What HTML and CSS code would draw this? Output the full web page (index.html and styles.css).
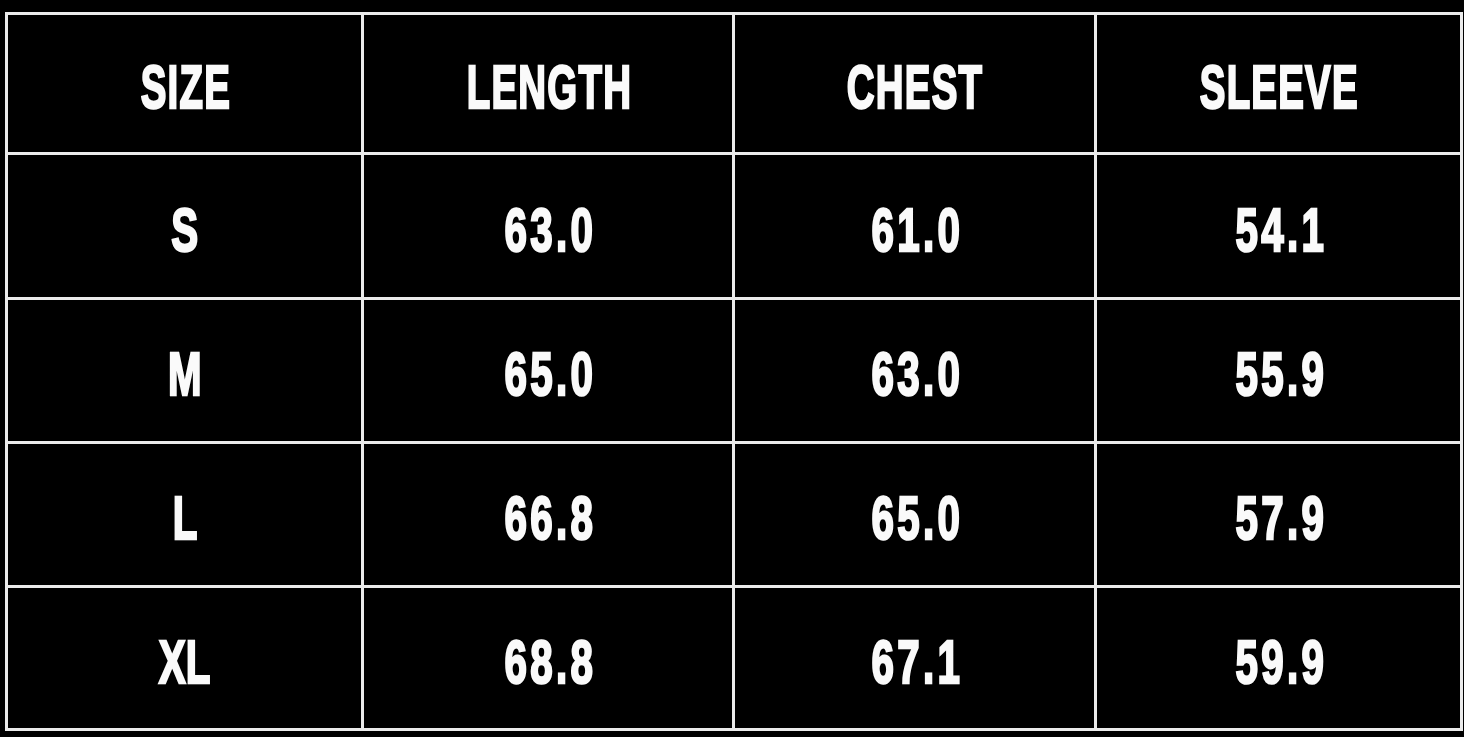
FILE: index.html
```html
<!DOCTYPE html>
<html lang="en">
<head>
<meta charset="utf-8">
<title>Size Chart</title>
<link rel="stylesheet" href="styles.css">
</head>
<body>
<div class="chart">
  <div class="cell head"><span>SIZE</span></div>
  <div class="cell head"><span>LENGTH</span></div>
  <div class="cell head"><span>CHEST</span></div>
  <div class="cell head"><span>SLEEVE</span></div>

  <div class="cell"><span>S</span></div>
  <div class="cell num"><span>63.0</span></div>
  <div class="cell num"><span>61.0</span></div>
  <div class="cell num"><span>54.1</span></div>

  <div class="cell"><span>M</span></div>
  <div class="cell num"><span>65.0</span></div>
  <div class="cell num"><span>63.0</span></div>
  <div class="cell num"><span>55.9</span></div>

  <div class="cell"><span>L</span></div>
  <div class="cell num"><span>66.8</span></div>
  <div class="cell num"><span>65.0</span></div>
  <div class="cell num"><span>57.9</span></div>

  <div class="cell"><span>XL</span></div>
  <div class="cell num"><span>68.8</span></div>
  <div class="cell num"><span>67.1</span></div>
  <div class="cell num"><span>59.9</span></div>
</div>
</body>
</html>
```
FILE: styles.css
```css
html, body {
  margin: 0;
  padding: 0;
  background: #000;
}

body {
  width: 1464px;
  height: 737px;
  overflow: hidden;
  padding-top: 12px;
  padding-left: 5px;
  box-sizing: border-box;
}

.chart {
  width: 1458px;
  height: 719px;
  box-sizing: border-box;
  background: #ebebeb;
  padding: 3px;
  display: grid;
  grid-template-columns: 353px 368px 359px 363px;
  grid-template-rows: 137px 142px 141px 141px 140px;
  gap: 3px;
}

.cell {
  background: #000;
  display: flex;
  align-items: center;
  justify-content: center;
  padding-top: 7px;
  box-sizing: border-box;
}

.cell span {
  display: inline-block;
  font-family: "Liberation Sans", "DejaVu Sans Condensed", sans-serif;
  font-weight: 700;
  font-size: 62px;
  line-height: 1;
  color: #fafafa;
  -webkit-text-stroke: 2.5px #fafafa;
  transform: scaleX(0.65);
}

.cell.head span {
  transform: scaleX(0.62);
  letter-spacing: 2px;
  margin-right: -2px;
}

.cell.num span {
  letter-spacing: 5px;
  margin-right: -5px;
}
```
